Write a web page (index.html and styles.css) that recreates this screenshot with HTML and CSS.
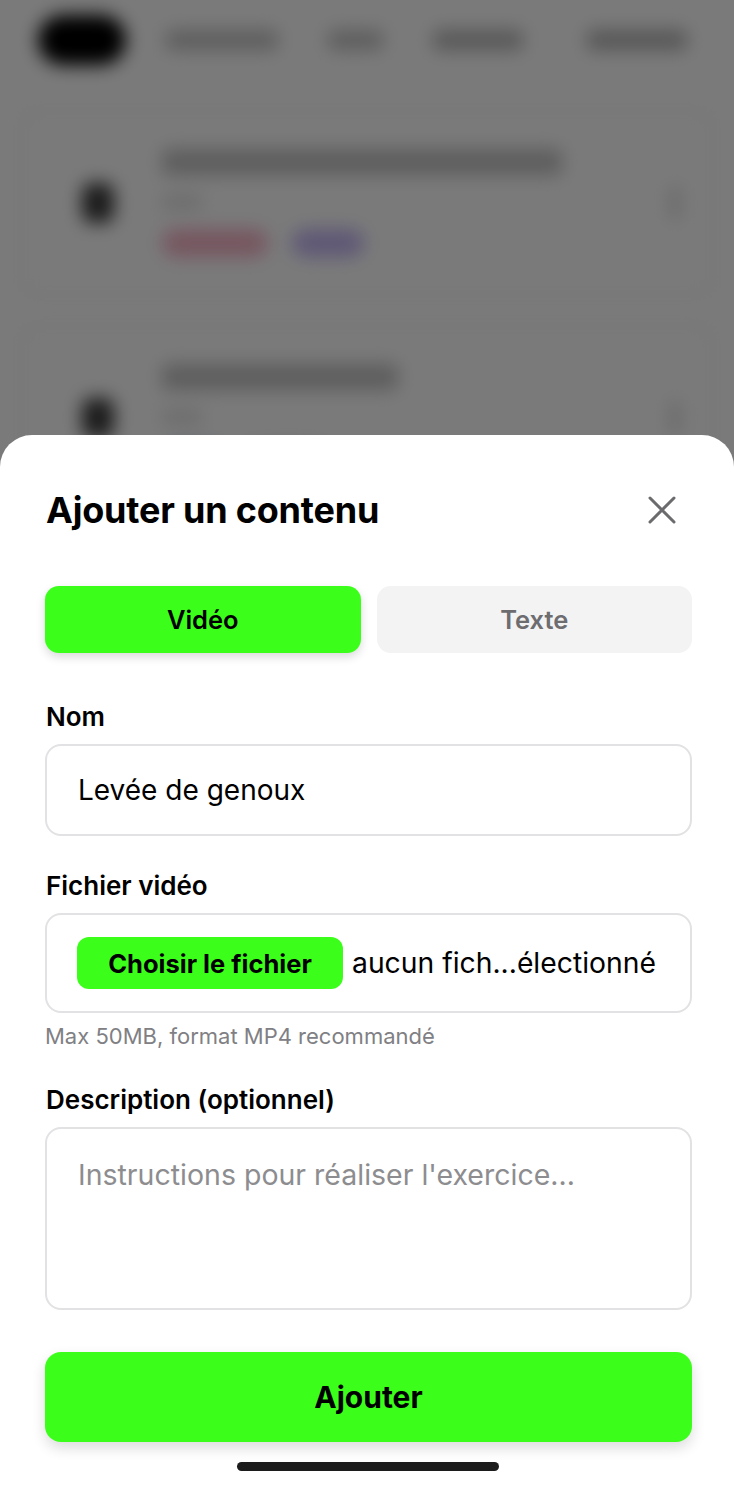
FILE: index.html
```html
<!DOCTYPE html>
<html lang="fr">
<head>
<meta charset="utf-8">
<title>Ajouter un contenu</title>
<link rel="stylesheet" href="styles.css">
</head>
<body>
<div class="backdrop">
  <div class="bg-page">
    <div class="bg-header">
      <div class="bg-logo"></div>
      <div class="bg-nav n1"></div>
      <div class="bg-nav n2"></div>
      <div class="bg-nav n3"></div>
      <div class="bg-nav n4"></div>
    </div>
    <div class="bg-card">
      <div class="bg-icon"></div>
      <div class="bg-body">
        <div class="bg-title t1"></div>
        <div class="bg-sub"></div>
        <div class="bg-tags">
          <span class="bg-tag pink"></span>
          <span class="bg-tag purple"></span>
        </div>
      </div>
      <div class="bg-more"></div>
    </div>
    <div class="bg-card">
      <div class="bg-icon"></div>
      <div class="bg-body">
        <div class="bg-title t2"></div>
        <div class="bg-sub"></div>
        <div class="bg-tags">
          <span class="bg-tag blue"></span>
          <span class="bg-tag grey"></span>
        </div>
      </div>
      <div class="bg-more"></div>
    </div>
  </div>
</div>
<div class="overlay"></div>

<section class="sheet">
  <header class="sheet-head">
    <h1 class="sheet-title">Ajouter un contenu</h1>
    <button class="close" aria-label="Fermer">
      <svg width="28" height="28" viewBox="0 0 28 28"><path d="M2 2 L26 26 M26 2 L2 26" stroke="#6b6b6e" stroke-width="3" stroke-linecap="round" fill="none"/></svg>
    </button>
  </header>

  <div class="tabs">
    <button class="tab active">Vidéo</button>
    <button class="tab">Texte</button>
  </div>

  <label class="label label-first">Nom</label>
  <div class="field">Levée de genoux</div>

  <label class="label">Fichier vidéo</label>
  <div class="file-field">
    <span class="file-btn">Choisir le fichier</span>
    <span class="file-name">aucun fich...électionné</span>
  </div>
  <p class="hint">Max 50MB, format MP4 recommandé</p>

  <label class="label label-desc">Description (optionnel)</label>
  <div class="textarea"><span class="placeholder">Instructions pour réaliser l'exercice...</span></div>

  <button class="submit">Ajouter</button>
  <div class="home-indicator"></div>
</section>
</body>
</html>
```
FILE: styles.css
```css
* { box-sizing: border-box; }
html, body { margin: 0; padding: 0; }
body {
  width: 734px;
  height: 1487px;
  overflow: hidden;
  position: relative;
  font-family: Inter, "Liberation Sans", sans-serif;
  background: #fff;
  color: #000;
}

/* Blurred background page */
.backdrop { position: absolute; inset: 0; }
.bg-page {
  filter: blur(9px);
  padding: 0 20px;
}
.bg-header {
  display: flex;
  align-items: center;
  height: 80px;
  padding: 0 18px;
}
.bg-logo {
  width: 88px; height: 50px;
  background: #000;
  border-radius: 25px;
  margin-right: 40px;
}
.bg-nav { height: 20px; background: #c4c4c4; border-radius: 6px; margin-right: 50px; }
.n1 { width: 112px; }
.n2 { width: 55px; }
.n3 { width: 90px; margin-right: 64px; background: #b8b8b8; }
.n4 { width: 100px; background: #b5b5b5; margin-right: 0; }
.bg-card {
  margin-top: 30px;
  height: 185px;
  border: 2px solid #e8e8e8;
  border-radius: 16px;
  display: flex;
  align-items: center;
  padding: 0 32px 0 60px;
}
.bg-card + .bg-card { margin-top: 30px; }
.bg-icon { width: 32px; height: 40px; background: #3a3a3a; border-radius: 10px; margin-right: 48px; }
.bg-body { flex: 1; display: flex; flex-direction: column; gap: 20px; }
.bg-title { height: 26px; background: #c4c4c4; border-radius: 6px; }
.t1 { width: 400px; }
.t2 { width: 236px; }
.bg-sub { width: 40px; height: 14px; background: #e0e0e0; border-radius: 4px; }
.bg-tags { display: flex; gap: 24px; }
.bg-tag { height: 28px; border-radius: 14px; }
.pink { width: 106px; background: #f7b4c8; }
.purple { width: 72px; background: #c6b7f5; }
.blue { width: 60px; background: #b7c9f2; }
.grey { width: 80px; background: #d9d9e6; }
.bg-more { width: 10px; height: 34px; background: #dadada; border-radius: 4px; }

.overlay {
  position: absolute; inset: 0;
  background: rgba(0, 0, 0, 0.52);
}

/* Bottom sheet */
.sheet {
  position: absolute;
  left: 0; right: 0; bottom: 0;
  top: 435px;
  background: #fff;
  border-radius: 32px 32px 0 0;
  padding: 50px 42px 0 45px;
  display: flex;
  flex-direction: column;
}
.sheet-head {
  height: 50px;
  display: flex;
  align-items: center;
  justify-content: space-between;
}
.sheet-title {
  margin: 0;
  font-size: 36px;
  font-weight: 700;
  letter-spacing: -0.2px;
  padding-left: 1px;
}
.close {
  border: 0; background: none; padding: 0;
  width: 28px; height: 28px;
  margin-right: 16px;
  display: flex;
}

.tabs {
  margin-top: 51px;
  display: grid;
  grid-template-columns: 1fr 1fr;
  gap: 16px;
}
.tab {
  height: 67px;
  border: 0;
  border-radius: 14px;
  background: #f3f3f4;
  color: #6d6d70;
  font-family: inherit;
  font-size: 25.5px;
  font-weight: 600;
}
.tab.active {
  background: #3bff1a;
  color: #000;
  box-shadow: 0 4px 10px rgba(0, 0, 0, 0.15);
}

.label {
  display: block;
  font-size: 26px;
  font-weight: 600;
  line-height: 28px;
  margin-top: 36px;
  margin-bottom: 13px;
  padding-left: 1px;
}
.label-first { margin-top: 50px; }
.label-desc { margin-top: 37px; }

.field {
  height: 92px;
  border: 2px solid #e2e2e4;
  border-radius: 16px;
  display: flex;
  align-items: center;
  padding-left: 31px;
  font-size: 28px;
  color: #000;
}

.file-field {
  height: 100px;
  border: 2px solid #e2e2e4;
  border-radius: 16px;
  display: flex;
  align-items: center;
  padding-left: 30px;
  gap: 9px;
}
.file-btn {
  height: 52px;
  width: 266px;
  background: #3bff1a;
  border-radius: 12px;
  display: flex;
  align-items: center;
  justify-content: center;
  font-size: 25.5px;
  font-weight: 700;
}
.file-name { font-size: 28.3px; }

.hint {
  margin: 10px 0 0;
  font-size: 22px;
  line-height: 26px;
  color: #808084;
}

.textarea {
  height: 183px;
  border: 2px solid #e2e2e4;
  border-radius: 16px;
  padding: 28px 31px;
  font-size: 28.5px;
  line-height: 36px;
}
.placeholder { color: #8d8d90; }

.submit {
  margin-top: 42px;
  height: 90px;
  border: 0;
  border-radius: 16px;
  background: #3bff1a;
  font-family: inherit;
  font-size: 30px;
  font-weight: 700;
  color: #000;
  box-shadow: 0 6px 14px rgba(0, 0, 0, 0.14);
}
.home-indicator {
  margin: 20px auto 0;
  width: 262px;
  height: 9px;
  border-radius: 5px;
  background: #1c1c1c;
  position: relative;
  left: -1px;
}
```
